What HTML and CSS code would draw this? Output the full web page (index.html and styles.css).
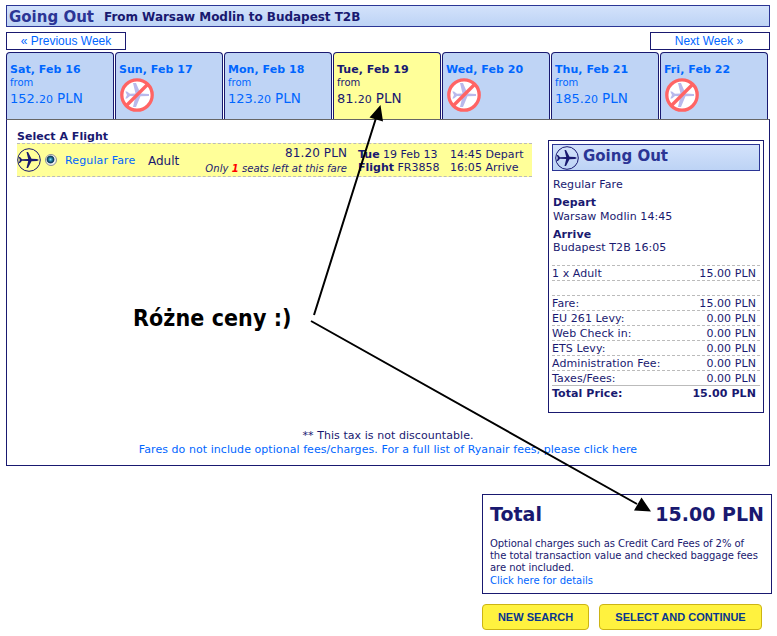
FILE: index.html
```
<!DOCTYPE html>
<html lang="en">
<head>
    <meta charset="UTF-8">
    <meta name="viewport" content="width=device-width, initial-scale=1.0">
    <title>Select A Flight</title>
    <link rel="stylesheet" href="styles.css">
</head>
<body>
    <!-- shared icons -->
    <svg class="defs" width="0" height="0">
        <symbol id="plane" viewBox="0 0 24 24">
            <circle cx="12" cy="12" r="11.3" fill="none" stroke="#191970" stroke-width="1"/>
            <path d="M22 12 L20 10.900 L14.500 10.800 L11 4 L9.500 4 L11.200 10.900 L5 11.300 L3 9 L1.800 9 L2.800 12 L1.800 15 L3 15 L5 12.700 L11.200 13.100 L9.500 20 L11 20 L14.500 13.200 L20 13.100 Z" fill="#191970"/>
        </symbol>
        <symbol id="no-flight" viewBox="0 0 34 34">
            <circle cx="17" cy="17" r="14.500" fill="#fff"/>
            <path d="M29 16 L20.500 15.500 L16 5 L13 5 L15.500 15.600 L10 15.800 L7 13.500 L5.300 13.500 L7 17 L5.300 20.500 L7 20.500 L10 18 L15.500 18.200 L13 29 L16 29 L20.500 18.300 L29 18 Z" fill="#b9b9ec"/>
            <circle cx="17" cy="17" r="15.200" fill="none" stroke="#ff6464" stroke-width="3.300"/>
            <path d="M6.500 27.500 L27.500 6.500" stroke="#ff6464" stroke-width="3.300"/>
        </symbol>
    </svg>

    <div class="page">
        <div class="title-bar">
            <h1>Going Out</h1>
            <span class="route">From Warsaw Modlin to Budapest T2B</span>
        </div>

        <div class="week-nav">
            <a class="week-link">« <span>Previous Week</span></a>
            <a class="week-link next"><span>Next Week</span> »</a>
        </div>

        <div class="tabs">
            <div class="tab">
                <div class="day">Sat, Feb 16</div>
                <div class="from">from</div>
                <div class="price">152.<small>20</small> <b>PLN</b></div>
            </div>
            <div class="tab">
                <div class="day">Sun, Feb 17</div>
                <svg class="no-flight"><use href="#no-flight"/></svg>
            </div>
            <div class="tab">
                <div class="day">Mon, Feb 18</div>
                <div class="from">from</div>
                <div class="price">123.<small>20</small> <b>PLN</b></div>
            </div>
            <div class="tab selected">
                <div class="day">Tue, Feb 19</div>
                <div class="from">from</div>
                <div class="price">81.<small>20</small> <b>PLN</b></div>
            </div>
            <div class="tab">
                <div class="day">Wed, Feb 20</div>
                <svg class="no-flight"><use href="#no-flight"/></svg>
            </div>
            <div class="tab">
                <div class="day">Thu, Feb 21</div>
                <div class="from">from</div>
                <div class="price">185.<small>20</small> <b>PLN</b></div>
            </div>
            <div class="tab">
                <div class="day">Fri, Feb 22</div>
                <svg class="no-flight"><use href="#no-flight"/></svg>
            </div>
        </div>

        <div class="panel">
            <div class="panel-body">
                <div class="flights">
                    <h2>Select A Flight</h2>
                    <div class="flight">
                        <svg class="plane"><use href="#plane"/></svg>
                        <span class="radio"></span>
                        <a class="fare-type">Regular Fare</a>
                        <span class="passenger">Adult</span>
                        <div class="fare">
                            <div class="fare-price">81.20 PLN</div>
                            <div class="seats">Only <b>1</b> seats left at this fare</div>
                        </div>
                        <div class="flight-no">
                            <div><b>Tue</b> 19 Feb 13</div>
                            <div><b>Flight</b> FR3858</div>
                        </div>
                        <div class="times">
                            <div>14:45 Depart</div>
                            <div>16:05 Arrive</div>
                        </div>
                    </div>
                    <div class="note">Różne ceny :)</div>
                </div>

                <div class="summary">
                    <div class="summary-title">
                        <svg class="plane"><use href="#plane"/></svg>
                        <h3>Going Out</h3>
                    </div>
                    <div class="details">
                        <p>Regular Fare</p>
                        <p class="depart"><b>Depart</b><br>Warsaw Modlin 14:45</p>
                        <p class="arrive"><b>Arrive</b><br>Budapest T2B 16:05</p>
                    </div>
                    <div class="prices">
                        <div class="row"><span>1 x Adult</span><span>15.00 PLN</span></div>
                        <div class="row"></div>
                        <div class="row"><span>Fare:</span><span>15.00 PLN</span></div>
                        <div class="row"><span>EU 261 Levy:</span><span>0.00 PLN</span></div>
                        <div class="row"><span>Web Check in:</span><span>0.00 PLN</span></div>
                        <div class="row"><span>ETS Levy:</span><span>0.00 PLN</span></div>
                        <div class="row"><span>Administration Fee:</span><span>0.00 PLN</span></div>
                        <div class="row"><span>Taxes/Fees:</span><span>0.00 PLN</span></div>
                        <div class="row total-row"><span>Total Price:</span><span>15.00 PLN</span></div>
                    </div>
                </div>
            </div>
            <div class="footnote">
                <div class="tax">** This tax is not discountable.</div>
                <a>Fares do not include optional fees/charges. For a full list of Ryanair fees, please click here</a>
            </div>
        </div>

        <div class="checkout">
            <div class="total-box">
                <div class="total"><span>Total</span><span class="amount">15.00 PLN</span></div>
                <p>Optional charges such as Credit Card Fees of 2% of<br>the total transaction value and checked baggage fees<br>are not included.</p>
                <a>Click here for details</a>
            </div>
            <div class="buttons">
                <button class="search">NEW SEARCH</button>
                <button class="continue">SELECT AND CONTINUE</button>
            </div>
        </div>
    </div>

    <!-- arrows from the note to both prices -->
    <svg class="arrows" width="777" height="636" viewBox="0 0 777 636">
        <path d="M314 315 L376 118 M311 321 L637 504" fill="none" stroke="#000" stroke-width="2"/>
        <path d="M380.500 105 L383 121.500 L369.500 117.500 Z M651 511.500 L634 510.500 L641.500 497.500 Z"/>
    </svg>
</body>
</html>
```
FILE: styles.css
```
* {
    box-sizing: border-box;
}

body {
    margin: 0;
    background: #fff;
    font-family: Verdana, 'DejaVu Sans', sans-serif;
    font-size: 11px;
    color: #191970;
}

h1, h2, h3, p {
    margin: 0;
}

a {
    color: #06f;
    text-decoration: none;
}

.defs {
    position: absolute;
}

.page {
    width: 772px;
    padding: 5px 0 0 6px;
}

.title-bar {
    display: flex;
    align-items: center;
    gap: 10px;
    width: 764px;
    height: 22px;
    padding: 2px 0 0 2px;
    border: 1px solid #2b3595;
    background: linear-gradient(#d3e2fb, #bdd3f5);
}

h1, h3 {
    font-size: 15px;
    line-height: 20px;
    color: #2b3595;
}

.route {
    font-size: 12px;
    font-weight: bold;
    letter-spacing: -0.03px;
}

.week-nav {
    display: flex;
    justify-content: space-between;
    width: 764px;
    margin-top: 5px;
}

.week-link {
    width: 120px;
    height: 18px;
    border: 1px solid #191970;
    font-family: Arial, 'Liberation Sans', sans-serif;
    font-size: 12px;
    line-height: 16px;
    text-align: center;
}

.week-link.next {
    padding-right: 2px;
}

.tabs {
    display: flex;
    gap: 1px;
    margin-top: 2px;
}

.tab {
    width: 108px;
    height: 67px;
    padding: 10px 0 0 3px;
    border: 1px solid #191970;
    border-bottom: none;
    border-radius: 4px 4px 0 0;
    background: #bfd4f5;
    color: #06f;
}

.tab.selected {
    background: #ff9;
    color: #191970;
}

.day {
    font-weight: bold;
    line-height: 13px;
    letter-spacing: 0.05px;
}

.from {
    font-size: 10px;
    line-height: 14px;
}

.price {
    font-size: 13px;
    line-height: 17px;
}

.price small {
    font-size: 11px;
}

.price b {
    font-size: 13.5px;
    font-weight: normal;
}

.no-flight {
    display: block;
    width: 34px;
    height: 34px;
    margin: 2px 0 0 1px;
}

.panel {
    width: 764px;
    height: 347px;
    border: 1px solid #191970;
    border-top-color: #666;
}

.panel-body {
    display: flex;
    justify-content: space-between;
    height: 308px;
    padding: 10px 5px 0 10px;
}

.flights {
    width: 515px;
}

h2 {
    font-size: 11px;
    line-height: 14px;
    height: 13px;
    letter-spacing: 0.03px;
}

.flight {
    display: flex;
    width: 515px;
    height: 34px;
    border-top: 1px dashed #bbb;
    border-bottom: 1px dashed #bbb;
    background: #ff9;
}

.plane {
    flex: none;
    width: 24px;
    height: 24px;
}

.flight .plane {
    margin-top: 4px;
}

.radio {
    width: 12px;
    height: 12px;
    margin: 10px 0 0 4px;
    border: 1px solid #8b9199;
    border-radius: 50%;
    background: radial-gradient(circle at 45% 45%, #8ee0fa 0, #2789ae 1.5px, #12405f 3px, #12405f 3.5px, #eee 4.3px);
}

.fare-type {
    width: 71px;
    margin-left: 8px;
    line-height: 33px;
    letter-spacing: 0.13px;
    white-space: nowrap;
}

.passenger {
    width: 40px;
    margin-left: 12px;
    font-size: 12px;
    line-height: 34px;
}

.fare {
    width: 159px;
    text-align: right;
    white-space: nowrap;
}

.fare-price {
    font-size: 12px;
    line-height: 18px;
    letter-spacing: 0.1px;
}

.seats {
    font-size: 10px;
    font-style: italic;
    line-height: 13px;
    letter-spacing: 0.05px;
}

.seats b {
    color: #f00;
}

.flight-no {
    width: 92px;
    margin-left: 11px;
    padding-top: 4px;
    line-height: 13px;
    white-space: nowrap;
}

.times {
    padding-top: 4px;
    line-height: 13px;
    letter-spacing: 0.05px;
    white-space: nowrap;
}

.note {
    margin: 127px 0 0 116px;
    font-family: Tahoma, 'DejaVu Sans Condensed', sans-serif;
    font-size: 23px;
    font-weight: bold;
    line-height: 28px;
    letter-spacing: 0.08px;
    color: #000;
    white-space: nowrap;
}

.summary {
    width: 216px;
    height: 273px;
    margin-top: 10px;
    padding: 3px;
    border: 1px solid #191970;
}

.summary-title {
    display: flex;
    gap: 4px;
    height: 27px;
    padding: 1px 0 0 2px;
    border: 1px solid #2b3595;
    background: linear-gradient(#d3e2fb, #bdd3f5);
}

.summary-title h3 {
    line-height: 21px;
}

.details {
    height: 94px;
    padding: 7px 0 0 1px;
    line-height: 13px;
    letter-spacing: 0.08px;
}

.depart {
    margin-top: 5px;
    line-height: 14px;
}

.arrive {
    margin-top: 4px;
}

.row {
    display: flex;
    justify-content: space-between;
    height: 15px;
    padding-right: 4px;
    border-top: 1px dashed #bbb;
    line-height: 16px;
    letter-spacing: 0.08px;
}

.total-row {
    border-top-style: solid;
    font-weight: bold;
}

.footnote {
    padding-top: 1px;
    line-height: 14px;
    letter-spacing: 0.06px;
    text-align: center;
}

.checkout {
    width: 290px;
    margin: 28px 0 0 476px;
}

.total-box {
    height: 100px;
    padding: 7px;
    border: 1px solid #191970;
    font-size: 10px;
    line-height: 12px;
    white-space: nowrap;
}

.total-box p {
    letter-spacing: -0.05px;
}

.total {
    display: flex;
    justify-content: space-between;
    margin-bottom: 12px;
    font-size: 19px;
    font-weight: bold;
    line-height: 24px;
}

.total-box a {
    line-height: 14px;
}

.buttons {
    display: flex;
    gap: 10px;
    margin-top: 10px;
}

button {
    height: 26px;
    padding: 0;
    border: 1px solid #ccb414;
    border-radius: 4px;
    background: #fff23f;
    font-family: Arial, 'Liberation Sans', sans-serif;
    font-size: 11px;
    font-weight: bold;
    color: #073590;
}

.search {
    width: 107px;
}

.continue {
    width: 163px;
}

.arrows {
    position: absolute;
    top: 0;
    left: 0;
}
```
